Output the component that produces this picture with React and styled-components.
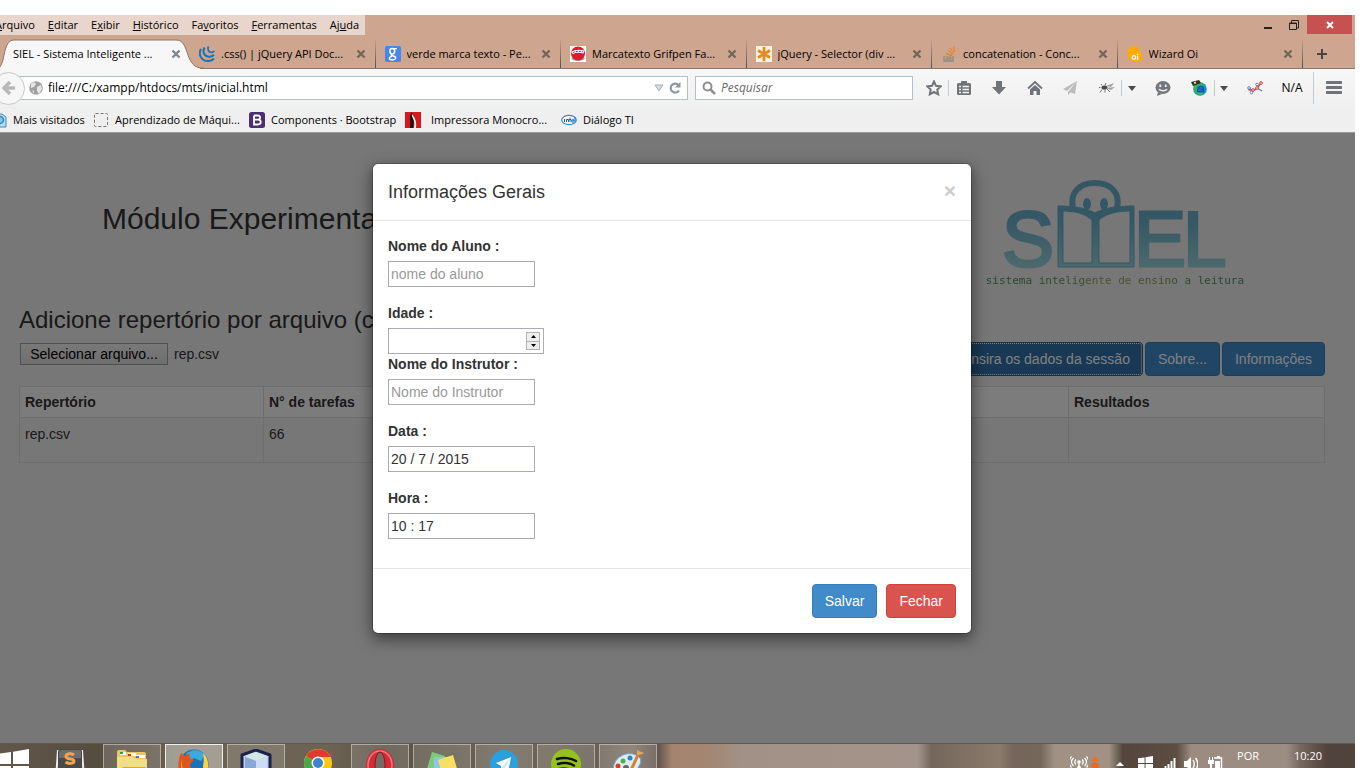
import React from "react";
import styled, { createGlobalStyle, css } from "styled-components";

const GlobalStyle = createGlobalStyle`
  *, *::before, *::after { box-sizing: border-box; }
  body { margin: 0; background: #fff; }
  button, input { font: inherit; margin: 0; }
  svg { display: block; flex: none; }
`;

const uiFont = `"Open Sans", "Noto Sans", sans-serif`;
const pageFont = `"Liberation Sans", Helvetica, Arial, sans-serif`;

const Desktop = styled.div`
  display: flex;
  min-height: 100vh;
  padding-top: 15px;
  padding-right: 11px;
  overflow: hidden;
  font: 12px/16px ${uiFont};
  color: #000;
`;

const Screen = styled.div`
  flex: 1;
  min-width: 0;
  margin-left: -11px;
  display: flex;
  flex-direction: column;
`;

/* ---------- window title bar and menu ---------- */

const TitleBar = styled.header`
  display: flex;
  justify-content: space-between;
  align-items: flex-start;
  height: 24px;
  background: #cea58e;
`;

const MenuBar = styled.nav`
  display: flex;
  gap: 13px;
  height: 20px;
  padding: 2px 6px;
  background: #e8d5cb;
  font-size: 11px;
`;

const MenuItem = styled.button`
  padding: 0;
  border: 0;
  background: none;
  color: #000;
  white-space: nowrap;
  line-height: 16px;
`;

const WindowButtons = styled.div`
  display: flex;
  padding-right: 3px;
`;

const WindowButton = styled.button`
  display: grid;
  place-items: center;
  width: ${(p) => (p.$close ? 45 : 26)}px;
  height: 19px;
  padding: 0;
  border: 0;
  background: ${(p) => (p.$close ? "#c75050" : "transparent")};
`;

/* ---------- tabs ---------- */

const TabStrip = styled.div`
  display: grid;
  grid-template-columns: 201px repeat(6, minmax(0, 1fr)) 52px;
  height: 30px;
  background: #cea58e;
  border-bottom: 1px solid #8f7768;
  font-size: 11px;
`;

const Tab = styled.div`
  position: relative;
  display: flex;
  align-items: center;
  gap: 6px;
  min-width: 0;
  height: 29px;
  padding: 0 9px 0 9px;
  border-right: 1px solid transparent;
  border-image: linear-gradient(#cea58e, #4f4c4e) 1;
  ${(p) =>
    p.$active &&
    css`
      height: 30px;
      padding-left: 24px;
      border: 0;
      z-index: 1;
    `}
`;

const TabShape = styled.svg`
  position: absolute;
  left: 9px;
  top: 0;
  z-index: -1;
`;

const TabTitle = styled.span`
  flex: 1;
  min-width: 0;
  white-space: nowrap;
  overflow: hidden;
`;

const PlainButton = styled.button`
  display: grid;
  place-items: center;
  padding: 0;
  border: 0;
  background: none;
`;

/* ---------- navigation ---------- */

const NavBar = styled.div`
  display: flex;
  align-items: center;
  height: 38px;
  padding: 0 7px 0 3px;
  background: linear-gradient(#f7f7f7, #f0f0f0);
`;

const BackButton = styled.button`
  display: grid;
  place-items: center;
  width: 33px;
  height: 33px;
  margin-right: -8px;
  z-index: 1;
  padding: 0;
  border: 1px solid #c8c8c8;
  border-radius: 50%;
  background: #f6f6f6;
`;

const FieldBox = styled.label`
  display: flex;
  align-items: center;
  height: 24px;
  border: 1px solid #b5bec6;
  background: #fff;
  ${(p) =>
    p.$search
      ? css`
          width: 218px;
          gap: 5px;
          padding: 0 6px;
          margin: 0 11px 0 7px;
        `
      : css`
          flex: 1;
          gap: 5px;
          padding: 0 6px 0 11px;
        `}
`;

const FieldInput = styled.input`
  flex: 1;
  min-width: 0;
  padding: 0;
  border: 0;
  outline: 0;
  background: none;
  color: #000;
  &::placeholder { color: #6a6a6a; font-style: italic; opacity: 1; }
`;

const NavButton = styled.button`
  display: grid;
  place-items: center;
  width: ${(p) => p.$w}px;
  height: 24px;
  padding: 0;
  border: 0;
  background: none;
  color: #000;
`;

const Divider = styled.span`
  width: 1px;
  height: ${(p) => (p.$tall ? 32 : 16)}px;
  margin: 0 ${(p) => p.$gap || 0}px;
  background: #c3ccd6;
`;

const Bookmarks = styled.nav`
  display: grid;
  grid-template-columns: 102px repeat(3, 156px) auto;
  justify-content: start;
  height: 26px;
  padding-left: 2px;
  background: #efefef;
  border-bottom: 1px solid #9a9a9a;
  font-size: 11px;
`;

const Bookmark = styled.a`
  display: flex;
  align-items: center;
  gap: ${(p) => (p.$wide ? 10 : 6)}px;
  color: #000;
  text-decoration: none;
  white-space: nowrap;
`;

/* ---------- page ---------- */

const Page = styled.main`
  position: relative;
  flex: 1;
  padding: 38px 30px 40px;
  background: #eee;
  color: #333;
  font: 14px/20px ${pageFont};
`;

const PageHead = styled.div`
  display: flex;
  justify-content: space-between;
  align-items: flex-start;
  padding: 0 79px 0 83px;
`;

const PageTitle = styled.h1`
  margin: 31px 0 0;
  font-size: 30px;
  line-height: 33px;
  font-weight: 400;
`;

const Logo = styled.div`
  display: flex;
  flex-direction: column;
  align-items: center;
  padding-top: 8px;
`;

const LogoCaption = styled.span`
  padding: 0 2px 0 4px;
  font: 11px/20px "DejaVu Sans Mono", monospace;
  white-space: nowrap;
  color: transparent;
  background: linear-gradient(90deg, #4f8a68, #5f8c5c 25%, #a6a662 50%, #98985e 60%, #50886a 90%);
  background-clip: text;
`;

const SectionTitle = styled.h2`
  margin: 15px 0 8px;
  font-size: 24px;
  line-height: 28px;
  font-weight: 400;
`;

const Toolbar = styled.div`
  display: flex;
  justify-content: space-between;
  align-items: flex-start;
  margin-bottom: 10px;
`;

const FilePicker = styled.div`
  display: flex;
  gap: 6px;
  align-items: center;
  padding: 1px;
`;

const FileInput = styled.input`
  position: absolute;
  width: 1px;
  height: 1px;
  opacity: 0;
`;

const FileLabel = styled.label`
  width: 148px;
  height: 22px;
  border: 1px solid #a0a0a0;
  background: linear-gradient(#f2f2f2, #dedede);
  color: #000;
  text-align: center;
  white-space: nowrap;
`;

const ButtonRow = styled.div`
  display: flex;
  gap: ${(p) => p.$gap}px;
`;

const tones = {
  primary: ["#428bca", "#357ebd"],
  pressed: ["#3071a9", "#285e8e"],
  danger: ["#d9534f", "#d43f3a"],
};

const Button = styled.button`
  height: 34px;
  padding: 6px 12px;
  border: 1px solid ${(p) => tones[p.$tone][1]};
  border-radius: 4px;
  background: ${(p) => tones[p.$tone][0]};
  color: #fff;
  line-height: 20px;
  white-space: nowrap;
  ${(p) =>
    p.$tone === "pressed" &&
    css`
      outline: 1px dotted #fff;
      outline-offset: -2px;
    `}
`;

const Table = styled.table`
  width: 100%;
  table-layout: fixed;
  border-collapse: collapse;
  th, td {
    border: 1px solid #ddd;
    text-align: left;
    vertical-align: top;
  }
  th { padding: 5px; background: #f9f9f9; }
  td { padding: 6px 5px 18px; }
`;

const Col = styled.col`
  width: ${(p) => p.$w};
`;

/* ---------- modal ---------- */

const Backdrop = styled.div`
  position: absolute;
  inset: 0;
  padding: 30px;
  background: rgba(0, 0, 0, 0.5);
`;

const Dialog = styled.section`
  max-width: 600px;
  margin: 0 auto;
  border: 1px solid rgba(0, 0, 0, 0.2);
  border-radius: 6px;
  background: #fff;
  background-clip: padding-box;
  box-shadow: 0 5px 15px rgba(0, 0, 0, 0.5);
`;

const DialogHead = styled.header`
  display: flex;
  justify-content: space-between;
  align-items: center;
  padding: 15px;
  border-bottom: 1px solid #e5e5e5;
`;

const DialogTitle = styled.h3`
  margin: 0;
  font-size: 18px;
  line-height: 26px;
  font-weight: 400;
`;

const CloseButton = styled.button`
  padding: 0 0 4px;
  border: 0;
  background: none;
  font-size: 21px;
  line-height: 21px;
  font-weight: 700;
  color: #ccc;
`;

const DialogBody = styled.form`
  padding: 15px 15px 13px;
`;

const Field = styled.div`
  display: flex;
  flex-direction: column;
  align-items: flex-start;
  gap: 5px;
  margin-bottom: ${(p) => (p.$tight ? 0 : 16)}px;
`;

const FieldLabel = styled.label`
  font-weight: 700;
`;

const TextInput = styled.input`
  width: ${(p) => (p.type === "number" ? 156 : 147)}px;
  height: 26px;
  padding: 1px 2px;
  border: 1px solid #ababb3;
  border-radius: 0;
  background: #fff;
  color: #333;
  appearance: textfield;
  &::placeholder { color: #999; opacity: 1; }
  &::-webkit-inner-spin-button { appearance: none; }
`;

const NumberBox = styled.div`
  position: relative;
`;

const Spinner = styled.div`
  position: absolute;
  right: 4px;
  top: 4px;
  display: grid;
  width: 14px;
  height: 18px;
  border: 1px solid #b4b4b4;
  background: #eee;
`;

const SpinButton = styled(PlainButton)`
  border-bottom: 1px solid #b4b4b4;
  &:last-child { border-bottom: 0; }
`;

const DialogFoot = styled.footer`
  display: flex;
  justify-content: flex-end;
  padding: 15px;
  border-top: 1px solid #e5e5e5;
`;

/* ---------- taskbar ---------- */

const Taskbar = styled.footer`
  display: flex;
  justify-content: space-between;
  height: 25px;
  overflow: hidden;
  border-top: 1px solid #625a50;
  background: linear-gradient(
    90deg,
    #62594b 0%, #554c40 8%, #6b6253 14%, #6c6354 25%, #595144 29%, #6d6658 38%,
    #675f55 44%, #807366 47%, #62564e 49%, #a5846e 50%, #a28773 53%, #a29187 55%, #a39389 67%,
    #a3938a 68%, #75675c 69%, #8b7b6c 74%, #75655a 75%, #75675a 77%, #a09184 78%, #a09184 82%, #54463c 83%, #5d4d43 87%,
    #9b8b80 88%, #9c8d83 95%, #75675e 96%, #50423c 98%
  );
`;

const Apps = styled.div`
  display: flex;
  gap: 4px;
`;

const AppButton = styled.button`
  display: flex;
  justify-content: center;
  align-items: flex-start;
  width: ${(p) => (p.$start ? 48 : 58)}px;
  height: 40px;
  padding: 4px 0 0;
  border: 1px solid ${(p) => (p.$focus ? "#f0f0ec" : p.$open ? "rgba(215,210,200,.6)" : "transparent")};
  background: ${(p) => (p.$focus ? "rgba(255,255,255,.38)" : p.$open ? "rgba(255,255,255,.14)" : "none")};
`;

const Tray = styled.div`
  display: flex;
  align-items: flex-start;
  color: #fff;
`;

const TrayItem = styled.span`
  display: flex;
  justify-content: center;
  width: ${(p) => p.$w}px;
  padding-top: ${(p) => (p.$text ? 4 : 12)}px;
  font-size: 11px;
`;

/* ---------- small drawings ---------- */

const Svg = ({ w = 16, h = 16, vb, children }) => (
  <svg width={w} height={h} viewBox={vb || `0 0 ${w} ${h}`} fill="none" aria-hidden="true">
    {children}
  </svg>
);

const CloseGlyph = ({ color = "#75655d" }) => (
  <Svg w={10} h={10}><path d="M1.500 1.500l7 7M8.500 1.500l-7 7" stroke={color} strokeWidth="2.400" /></Svg>
);

const favicons = {
  jquery: (
    <Svg>
      <path d="M2 3C-1 8 2 14.500 8 15c3 .3 5-.5 7-2.500" stroke="#1b73b3" strokeWidth="2" />
      <path d="M5.500 1.500C3 6 5.500 10.500 10 10.800c2 .1 3.500-.5 5-2" stroke="#1b73b3" strokeWidth="2" />
      <path d="M9.500.5c-1.500 3 0 5.500 2.500 5.800 1.500.1 2.500-.4 3.300-1.300" stroke="#1b73b3" strokeWidth="1.800" />
    </Svg>
  ),
  google: (
    <Svg>
      <rect width="16" height="16" rx="1.500" fill="#4787ed" />
      <ellipse cx="7.300" cy="5.300" rx="2.400" ry="2.700" stroke="#fff" strokeWidth="1.500" />
      <path d="M9 2.700h3M7 8c-2 1.300 0 1.600 1.500 2 3.500 1 2.500 4-1 4-4 0-4-3-.5-3.700" stroke="#fff" strokeWidth="1.300" />
    </Svg>
  ),
  grif: (
    <Svg>
      <rect width="16" height="16" fill="#fff" />
      <ellipse cx="8" cy="12.500" rx="6.500" ry="2.500" fill="#aaa" />
      <circle cx="8" cy="7.500" r="7" fill="#d81e26" />
      <path d="M2 7c3-2 8-2 12-1" stroke="#fff" strokeWidth="3.200" />
      <path d="M3 6.500c3-1.500 7-1.500 10-.7" stroke="#d81e26" strokeWidth="1" strokeDasharray="2 1" />
    </Svg>
  ),
  star: (
    <Svg>
      <rect width="16" height="16" fill="#fdf1de" />
      <path d="M8 1v14M2 4.500l12 7M14 4.500l-12 7" stroke="#e38a25" strokeWidth="2.800" />
    </Svg>
  ),
  stack: (
    <Svg>
      <path d="M3 10v5h9v-5" stroke="#8b8b8b" strokeWidth="1.300" />
      <path d="M4.500 13h6" stroke="#918472" strokeWidth="1.300" />
      <path d="M4.500 10.800l6 .5" stroke="#a58552" strokeWidth="1.300" />
      <path d="M5 7.700l6 2" stroke="#bd8942" strokeWidth="1.300" />
      <path d="M7 4.500l5 4" stroke="#db8b32" strokeWidth="1.300" />
      <path d="M9 2l3.500 5M12.500.5l1.300 5.500" stroke="#f48024" strokeWidth="1.300" />
    </Svg>
  ),
  oi: (
    <Svg>
      <path d="M1 7C0 3 3 0 7 0c4 0 6 3 5 6 3 0 4 3 3.500 6-.5 3-3 4-5 3.500-2 1-5 .5-6-1.500C1 14 0 9 1 7z" fill="#ffab00" />
      <circle cx="7" cy="11.500" r="1.800" stroke="#fff" strokeWidth="1.300" />
      <path d="M10.700 9.800V14M10.700 7.700v1.200" stroke="#fff" strokeWidth="1.300" />
    </Svg>
  ),
};

const bookmarkIcons = {
  visited: (
    <Svg>
      <path d="M3 2h8l4 3v10H3z" fill="#b9dcf0" stroke="#3b8bb9" />
      <circle cx="9" cy="8" r="3.500" fill="#82c4e8" stroke="#3b8bb9" strokeWidth="1.500" />
    </Svg>
  ),
  blank: <Svg><rect x="1.500" y="1.500" width="13" height="13" rx="1" stroke="#777" strokeDasharray="3 2" /></Svg>,
  bootstrap: (
    <Svg>
      <rect width="16" height="16" rx="2.500" fill="#4b2f73" />
      <path d="M5 3.500h3.700c3.500 0 3 4.200 0 4.200H5m4 0c3.700 0 3.600 4.800 0 4.800H5v-9" stroke="#fff" strokeWidth="1.800" />
    </Svg>
  ),
  printer: (
    <Svg>
      <rect width="16" height="16" fill="#d9161c" />
      <path d="M7 0c-4 5-1 7-2 16h3c1-5 1-9 0-12z" fill="#151515" />
      <path d="M7 2c-1 4 4 5 2 14h2c1-6-1-10-4-14z" fill="#fff" />
    </Svg>
  ),
  intel: (
    <Svg>
      <ellipse cx="8" cy="8" rx="7.300" ry="4.700" fill="#f4fafe" stroke="#3b8bc8" strokeWidth="1.200" />
      <path d="M3.500 7v3M5.500 10V7.500h2V10M9 5.500V10M10 7.500H8M10.500 8.800h2.500c0-2-2.500-2-2.500 0s2 1.500 2.500 1M14 5v5" stroke="#0e6eb4" />
    </Svg>
  ),
};

const CaretDown = () => <Svg w={8} h={5}><path d="M0 0h8L4 5z" fill="#4b4b4b" /></Svg>;

const nav = {
  back: <Svg w={18} h={16}><path d="M15 8H5M10 2L4 8l6 6" stroke="#b9b9b9" strokeWidth="3.500" /></Svg>,
  globe: (
    <Svg w={14} h={14}>
      <circle cx="7" cy="7" r="6.800" fill="#a1a1a1" />
      <path d="M2 3l3-2 2 2-2 3-3 1zM8 6l4-2 1 4-3 5-2-3zM3 9l2 1v3z" fill="#e6e6e6" />
    </Svg>
  ),
  drop: <Svg w={10} h={8}><path d="M1 1h8L5 7z" fill="#d6dde4" stroke="#a6b0ba" /></Svg>,
  reload: (
    <Svg w={12} h={12}>
      <path d="M9.500 3A4.500 4.500 0 1 0 10 8.500" stroke="#8b97a3" strokeWidth="2.200" />
      <path d="M11.500 0v5.500H6z" fill="#8b97a3" />
    </Svg>
  ),
  search: (
    <Svg w={14} h={14}>
      <circle cx="5.500" cy="5.500" r="4" stroke="#8e8e8e" strokeWidth="2" />
      <path d="M8.500 8.500l4.500 4.500" stroke="#8e8e8e" strokeWidth="2.500" />
    </Svg>
  ),
  star: (
    <Svg><path d="M8 1.500l2 4.300 4.700.6-3.400 3.200.9 4.700L8 12l-4.200 2.300.9-4.700L1.300 6.400 6 5.800z" stroke="#707378" strokeWidth="2" /></Svg>
  ),
  list: (
    <Svg>
      <rect x="1" y="3" width="14" height="12" rx="1.500" fill="#707378" />
      <path d="M5 3.500V1h6v2.500" fill="#707378" />
      <path d="M3 6.500h2M6.500 6.500H13M3 9.500h2M6.500 9.500H13M3 12.500h2M6.500 12.500H13" stroke="#f4f4f4" strokeWidth="1.300" />
    </Svg>
  ),
  download: <Svg><path d="M5 1h6v6h4l-7 7.500L1 7h4z" fill="#707378" /></Svg>,
  home: (
    <Svg>
      <path d="M1 8.500l7-6.500 7 6.500" stroke="#707378" strokeWidth="1.800" />
      <path d="M8 5l5 4.500V15h-3.500v-4h-3v4H3V9.500z" fill="#707378" />
    </Svg>
  ),
  plane: (
    <Svg>
      <path d="M15 1L1 9l4 2zM15 1L6 12v3l2.500-2.500L13 14z" fill="#bcbcbc" />
    </Svg>
  ),
  fly: (
    <Svg>
      <ellipse cx="5.500" cy="7.500" rx="3" ry="2" fill="#4a4a4a" />
      <path d="M7 6l8-3-3 4zM7 8l9-1-4 3z" fill="#a3a3a3" />
      <path d="M3 5.500L2 4M6 5.500L7 3M3 9.500l-2 3M6 9.500v3M8 9l3 3M1.500 7.500H0" stroke="#555" strokeWidth=".8" />
    </Svg>
  ),
  chat: (
    <Svg>
      <ellipse cx="8" cy="7.500" rx="7.500" ry="6.500" fill="#74777b" />
      <path d="M3 12l-1 4 5-2" fill="#74777b" />
      <path d="M5.300 4.500v2.500M10.700 4.500v2.500" stroke="#f2f2f2" strokeWidth="1.800" />
      <path d="M4 9.200c1.500 2.200 6.500 2.200 8 0" stroke="#f2f2f2" strokeWidth="1.500" />
    </Svg>
  ),
  world: (
    <Svg>
      <circle cx="9" cy="9" r="6.800" fill="#1a8fd6" />
      <path d="M3 5c4-4 10-2 12 2-4-3-9-1-9 2s4 4 7 4c-5 5-12 0-10-8z" fill="#2fb463" />
      <path d="M7 8c2-3 6-1 5.500 1.500v2c-2-1-6 1.500-6-1s4-1.500 6-1" stroke="#1450a8" strokeWidth="1.400" />
      <path d="M0 2l8-2 2 3-8 3z" fill="#3b2b22" />
      <path d="M3 3l2-.5" stroke="#e7d4b5" strokeWidth="2" />
    </Svg>
  ),
  chart: (
    <Svg>
      <path d="M1 7l5 4 4-3 5 3" stroke="#5b7fc7" strokeWidth="1.300" />
      <path d="M1 9.500l5 1 4-2 4-5.500" stroke="#dd3a3a" strokeWidth="1.300" />
      <g stroke="#dd3a3a" fill="#fff"><circle cx="6" cy="10" r="1.300" /><circle cx="10" cy="8" r="1.300" /><circle cx="14" cy="3" r="1.300" /></g>
      <g stroke="#5b7fc7" fill="#fff"><circle cx="2" cy="8" r="1.300" /><circle cx="4.500" cy="12.500" r="1.300" /><circle cx="10" cy="4.500" r="1.300" /></g>
    </Svg>
  ),
  menu: <Svg><path d="M1 2.500h14M1 7.500h14M1 12.500h14" stroke="#707378" strokeWidth="3" strokeLinecap="round" /></Svg>,
};

const apps = [
  ["Sublime Text", "", (
    <Svg w={30} h={30}>
      <path d="M3 1L1 30M27 1l2 29" stroke="#eee" strokeWidth="2" />
      <rect x="3" y="0" width="24" height="30" rx="3" fill="#4a4a4a" />
      <path d="M4 9h22V3a2 2 0 0 0-2-2H6a2 2 0 0 0-2 2z" fill="#6d6d6d" />
      <path d="M19 6c-2-2-8-2-8 1.500S19 9 19 12s-6 3-8.500 1" stroke="#f7a24a" strokeWidth="3" />
    </Svg>
  )],
  ["Explorador de Arquivos", "open", (
    <Svg w={32} h={30}>
      <path d="M1 3q0-2 2-2h6l2 2h17q2 0 2 2v25H1z" fill="#e6c868" />
      <path d="M4 3h6v3H4zM12 4h8v3h-8zM20 6h9v3h-9z" fill="#fff" />
      <path d="M4 3h3v2H4z" fill="#2aa52a" /><path d="M12 5h3v2h-3z" fill="#c83b2b" /><path d="M20 7h3v2h-3z" fill="#2c8bd8" />
      <path d="M1 8h16l2 2h12v20H1z" fill="#f4dd8a" />
      <path d="M5 30v-7q0-4 4-4h20v3" stroke="#64bfe0" strokeWidth="2" />
    </Svg>
  )],
  ["Firefox", "focus", (
    <Svg w={32} h={32}>
      <circle cx="16" cy="15" r="14.500" fill="#1c72b8" />
      <path d="M8 5c5-5 14-5 19 1l-4 6-7-3-5 3z" fill="#3fa9df" />
      <path d="M25 4c8 7 7 21-5 27 4-5 6-9 5-14 1-5 1-9 0-13z" fill="#ffd340" />
      <path d="M3 4l4 3 4-3 1 5 4 2-4 4c0 5 5 7 9 5-2 8-12 10-18 5C-1 20 0 10 3 4z" fill="#e0551b" />
      <path d="M4 10c-1 6 1 14 8 19C5 28 1 20 4 10z" fill="#fba52c" />
    </Svg>
  )],
  ["VirtualBox", "open", (
    <Svg w={32} h={32}>
      <path d="M16 1l14 5v18l-14 8L2 24V6z" fill="#bdd0e6" stroke="#1c2150" strokeWidth="3" strokeLinejoin="round" />
      <path d="M5 7l11-4 11 4-11 5z" fill="#d5e7df" />
      <path d="M5 8l11 4v17L5 24z" fill="#8aa7d6" /><path d="M27 8l-11 4v17l11-5z" fill="#cddcf4" />
    </Svg>
  )],
  ["Chrome", "", (
    <Svg w={28} h={28}>
      <circle cx="14" cy="14" r="14" fill="#fbc90d" />
      <path d="M14 14L2 7A14 14 0 0 1 26.500 8H14z" fill="#dd3b2f" />
      <path d="M14 14L2 7a14 14 0 0 0 10 21l6-9z" fill="#4ca749" />
      <circle cx="14" cy="14" r="6.500" fill="#fff" /><circle cx="14" cy="14" r="5" fill="#3f83cd" />
    </Svg>
  )],
  ["Opera", "open", (
    <Svg w={28} h={32}>
      <ellipse cx="14" cy="16" rx="14" ry="16" fill="#d62a35" />
      <ellipse cx="14" cy="16" rx="12" ry="14" stroke="#f17680" strokeWidth="1.500" />
      <ellipse cx="14" cy="16" rx="5" ry="13" fill="#756b60" stroke="#8a1420" />
    </Svg>
  )],
  ["Notas Autoadesivas", "open", (
    <Svg w={32} h={30}>
      <path d="M6 3l13 4-4 16-14-3z" fill="#7ecb7b" /><path d="M8 8h15v18H8z" fill="#8bc5f2" />
      <path d="M12 11l15-5 5 17-15 6z" fill="#f8df63" />
    </Svg>
  )],
  ["Telegram", "open", (
    <Svg w={28} h={30}>
      <circle cx="14" cy="15" r="14" fill="#2ba0da" />
      <path d="M6 14l15-6-3 16-5-5-2 3v-5z" fill="#fff" /><path d="M12 18l9-10-7 12z" fill="#cfe3ef" />
    </Svg>
  )],
  ["Spotify", "open", (
    <Svg w={30} h={30}>
      <circle cx="15" cy="15" r="15" fill="#94c11c" />
      <path d="M6 10c6-2 14-1 19 2M7 15c5-2 12-1 16 1.500M8 20c4-1 9-.5 13 1.500" stroke="#111" strokeWidth="2.500" strokeLinecap="round" />
    </Svg>
  )],
  ["Paint", "open", (
    <Svg w={32} h={32}>
      <path d="M1 20C2 9 12 3 21 5c9 2 9 8 6 12-3 5 0 8-5 12-6 4-21 2-21-9z" fill="#dcebf5" stroke="#6ba4c9" />
      <circle cx="6" cy="17" r="2.500" fill="#d6402e" /><circle cx="11" cy="12" r="2.500" fill="#54ae46" /><circle cx="18" cy="9" r="2.500" fill="#2d82d4" /><circle cx="14" cy="19" r="3" fill="#6a645c" />
      <path d="M25 0c1 3 4 2 7 4-2 2-5 1-7 3z" fill="#e1a85b" />
      <path d="M26 6L19 21" stroke="#d9802c" strokeWidth="3" />
    </Svg>
  )],
];

const WindowsMark = ({ size }) => (
  <Svg w={size} h={size} vb="0 0 32 32">
    <path d="M0 5l14-2v12H0zM16 2.700L32 0v15H16zM0 17h14v12L0 27zM16 17h16v15l-16-2.500z" fill="#fff" />
  </Svg>
);

const tray = [
  [18, <Svg w={18} h={16}><g stroke="#fff" strokeWidth="1.200"><circle cx="9" cy="6" r="1.200" fill="#fff" /><path d="M6 3.500c-1.500 1.500-1.500 3.500 0 5M3.500 2c-2.500 2.500-2.500 5.500 0 8M1.500.5c-3 3.500-3 7.500 0 11M12 3.500c1.500 1.500 1.500 3.500 0 5M14.500 2c2.500 2.500 2.500 5.500 0 8M16.500.5c3 3.500 3 7.500 0 11M9 7v8M9 9l-3 6M9 9l3 6" /></g></Svg>],
  [14, <Svg w={8} h={14}><path d="M4 0l4 5H0z" fill="#e86f2c" /><circle cx="4" cy="10" r="3.700" fill="#e4692b" /></Svg>],
  [36, <Svg w={8} h={14}><path d="M4 6l4 4H0z" fill="#fff" /></Svg>],
  [14, <WindowsMark size={15} />],
  [34, <Svg w={16} h={16}><path d="M1.500 15v-3M4.500 15v-5M7.500 15V8M10.500 15V5M13.500 15V2" stroke="#fff" strokeWidth="2" /></Svg>],
  [10, <Svg w={14} h={16}><path d="M0 5h3l4-4v14l-4-4H0z" fill="#fff" /><path d="M9 4c2 3 2 5 0 8M11.500 2c3 4 3 8 0 12" stroke="#fff" strokeWidth="1.300" /></Svg>],
  [39, <Svg w={16} h={16}><path d="M6 2h7.500v14" stroke="#fff" strokeWidth="1.500" /><path d="M9 0h3v2H9zM7 5h5v11H7z" fill="#fff" /><path d="M0 4h6v4H4v8H2V8H0z" fill="#fff" /><path d="M1.500 1v3M4.500 1v3" stroke="#fff" /></Svg>],
];

const SielMark = () => (
  <svg width="224" height="92" viewBox="0 0 224 92" aria-label="SIEL" role="img">
    <defs>
      <linearGradient id="siel" gradientUnits="userSpaceOnUse" x1="0" y1="0" x2="0" y2="92">
        <stop offset="0" stopColor="#68acca" />
        <stop offset="0.45" stopColor="#69b0cc" />
        <stop offset="1" stopColor="#9cd6da" />
      </linearGradient>
    </defs>
    <path d="M71 30C67 12 79 4 93 4s26 8 22 26" fill="none" stroke="url(#siel)" strokeWidth="6" />
    <ellipse cx="85" cy="25" rx="4" ry="6" fill="url(#siel)" />
    <ellipse cx="102" cy="25" rx="4" ry="6" fill="url(#siel)" />
    <path
      fill="url(#siel)"
      stroke="#68aecd"
      fillRule="evenodd"
      d="M56 27c17 0 28 2 37 7 9-5 20-7 39-7v61H56zM61 32v52h29V41c-7-6-16-9-29-9zM128 32c-14 0-24 3-31 9v43h31z"
    />
    <g fill="url(#siel)" stroke="url(#siel)" strokeWidth="3" fontFamily="Liberation Sans, Arial, sans-serif" fontSize="78">
      <text x="0" y="87">S</text>
      <text x="132" y="87">E</text>
      <text x="181" y="87">L</text>
    </g>
  </svg>
);

/* ---------- content ---------- */

const menus = [["", "A", "rquivo"], ["", "E", "ditar"], ["E", "x", "ibir"], ["", "H", "istórico"], ["Fa", "v", "oritos"], ["", "F", "erramentas"], ["Aj", "u", "da"]];

const tabs = [
  ["jquery", ".css() | jQuery API Doc..."],
  ["google", "verde marca texto - Pe..."],
  ["grif", "Marcatexto Grifpen Fa..."],
  ["star", "jQuery - Selector (div ..."],
  ["stack", "concatenation - Conc..."],
  ["oi", "Wizard Oi"],
];

const bookmarks = [
  ["visited", "Mais visitados"],
  ["blank", "Aprendizado de Máqui..."],
  ["bootstrap", "Components · Bootstrap"],
  ["printer", "Impressora Monocro..."],
  ["intel", "Diálogo TI"],
];

function BrowserChrome() {
  return (
    <>
      <TitleBar>
        <MenuBar>
          {menus.map(([a, key, b]) => (
            <MenuItem key={b}>{a}<u>{key}</u>{b}</MenuItem>
          ))}
        </MenuBar>
        <WindowButtons>
          <WindowButton aria-label="Minimizar"><Svg w={8} h={12}><path d="M0 9h8" stroke="#222" strokeWidth="2" /></Svg></WindowButton>
          <WindowButton aria-label="Restaurar"><Svg w={10} h={10}><path d="M.5 3h7v6.500h-7zM2.500 3V.5h7V8H7.500M.5 3.500h7" stroke="#222" /></Svg></WindowButton>
          <WindowButton $close aria-label="Fechar janela"><Svg w={8} h={8}><path d="M1 1l6 6M7 1L1 7" stroke="#fff" strokeWidth="2" /></Svg></WindowButton>
        </WindowButtons>
      </TitleBar>
      <TabStrip>
        <Tab $active>
          <TabShape width="206" height="30" viewBox="0 0 206 30">
            <path d="M0 30C8 26 4 1 16 1h162c14 0 8 25 24 28v1z" fill="#f7f7f7" />
            <path d="M0 29C8 26 4 1 16 1h162c14 0 8 25 24 28h4" fill="none" stroke="#8f7768" />
          </TabShape>
          <TabTitle>SIEL - Sistema Inteligente ...</TabTitle>
          <PlainButton aria-label="Fechar aba"><CloseGlyph color="#7c8791" /></PlainButton>
        </Tab>
        {tabs.map(([icon, title]) => (
          <Tab key={title}>
            {favicons[icon]}
            <TabTitle>{title}</TabTitle>
            <PlainButton aria-label="Fechar aba"><CloseGlyph /></PlainButton>
          </Tab>
        ))}
        <PlainButton aria-label="Nova aba"><Svg w={24} h={10}><path d="M5 0v10M0 5h10" stroke="#4a4341" strokeWidth="2" /></Svg></PlainButton>
      </TabStrip>
      <NavBar>
        <BackButton aria-label="Voltar">{nav.back}</BackButton>
        <FieldBox>
          {nav.globe}
          <FieldInput aria-label="Endereço" defaultValue="file:///C:/xampp/htdocs/mts/inicial.html" />
          {nav.drop}
          {nav.reload}
        </FieldBox>
        <FieldBox $search>
          {nav.search}
          <FieldInput aria-label="Pesquisar" placeholder="Pesquisar" />
        </FieldBox>
        <NavButton $w={20} aria-label="Favoritar">{nav.star}</NavButton>
        <Divider $gap={4} />
        <NavButton $w={22} aria-label="Lista">{nav.list}</NavButton>
        <NavButton $w={48} aria-label="Downloads">{nav.download}</NavButton>
        <NavButton $w={24} aria-label="Início">{nav.home}</NavButton>
        <NavButton $w={46} aria-label="Enviar">{nav.plane}</NavButton>
        <NavButton $w={28} aria-label="Firebug">{nav.fly}</NavButton>
        <Divider />
        <NavButton $w={20} aria-label="Opções do Firebug"><CaretDown /></NavButton>
        <NavButton $w={42} aria-label="Conversa">{nav.chat}</NavButton>
        <NavButton $w={30} aria-label="Mundo">{nav.world}</NavButton>
        <Divider />
        <NavButton $w={18} aria-label="Opções do mundo"><CaretDown /></NavButton>
        <NavButton $w={44} aria-label="Gráfico">{nav.chart}</NavButton>
        <NavButton $w={30}>N/A</NavButton>
        <Divider $tall $gap={6} />
        <NavButton $w={28} aria-label="Menu">{nav.menu}</NavButton>
      </NavBar>
      <Bookmarks>
        {bookmarks.map(([icon, title]) => (
          <Bookmark key={title} href="#" $wide={icon === "printer"}>{bookmarkIcons[icon]}{title}</Bookmark>
        ))}
      </Bookmarks>
    </>
  );
}

function InfoDialog() {
  return (
    <Backdrop>
      <Dialog role="dialog" aria-labelledby="dialog-title">
        <DialogHead>
          <DialogTitle id="dialog-title">Informações Gerais</DialogTitle>
          <CloseButton aria-label="Fechar">×</CloseButton>
        </DialogHead>
        <DialogBody>
          <Field>
            <FieldLabel htmlFor="aluno">Nome do Aluno :</FieldLabel>
            <TextInput id="aluno" type="text" placeholder="nome do aluno" />
          </Field>
          <Field $tight>
            <FieldLabel htmlFor="idade">Idade :</FieldLabel>
            <NumberBox>
              <TextInput id="idade" type="number" />
              <Spinner>
                <SpinButton type="button" aria-label="Aumentar"><Svg w={5} h={3}><path d="M0 3L2.500 0 5 3z" fill="#000" /></Svg></SpinButton>
                <SpinButton type="button" aria-label="Diminuir"><Svg w={5} h={3}><path d="M0 0h5L2.500 3z" fill="#000" /></Svg></SpinButton>
              </Spinner>
            </NumberBox>
          </Field>
          <Field>
            <FieldLabel htmlFor="instrutor">Nome do Instrutor :</FieldLabel>
            <TextInput id="instrutor" type="text" placeholder="Nome do Instrutor" />
          </Field>
          <Field>
            <FieldLabel htmlFor="data">Data :</FieldLabel>
            <TextInput id="data" type="text" defaultValue="20 / 7 / 2015" />
          </Field>
          <Field>
            <FieldLabel htmlFor="hora">Hora :</FieldLabel>
            <TextInput id="hora" type="text" defaultValue="10 : 17" />
          </Field>
        </DialogBody>
        <DialogFoot>
          <ButtonRow $gap={9}>
            <Button $tone="primary">Salvar</Button>
            <Button $tone="danger">Fechar</Button>
          </ButtonRow>
        </DialogFoot>
      </Dialog>
    </Backdrop>
  );
}

export default function App() {
  return (
    <>
      <GlobalStyle />
      <Desktop>
        <Screen>
          <BrowserChrome />
          <Page>
            <PageHead>
              <PageTitle>Módulo Experimental</PageTitle>
              <Logo>
                <SielMark />
                <LogoCaption>sistema inteligente de ensino a leitura</LogoCaption>
              </Logo>
            </PageHead>
            <SectionTitle>Adicione repertório por arquivo (csv)</SectionTitle>
            <Toolbar>
              <FilePicker>
                <FileInput id="arquivo" type="file" />
                <FileLabel htmlFor="arquivo">Selecionar arquivo...</FileLabel>
                <span>rep.csv</span>
              </FilePicker>
              <ButtonRow $gap={2}>
                <Button $tone="pressed">Insira os dados da sessão</Button>
                <Button $tone="primary">Sobre...</Button>
                <Button $tone="primary">Informações</Button>
              </ButtonRow>
            </Toolbar>
            <Table>
              <colgroup><Col $w="244px" /><Col $w="auto" /><Col $w="256px" /></colgroup>
              <thead><tr><th>Repertório</th><th>N° de tarefas</th><th>Resultados</th></tr></thead>
              <tbody><tr><td>rep.csv</td><td>66</td><td /></tr></tbody>
            </Table>
            <InfoDialog />
          </Page>
          <Taskbar>
            <Apps>
              <AppButton $start aria-label="Iniciar"><WindowsMark size={32} /></AppButton>
              {apps.map(([name, state, icon]) => (
                <AppButton key={name} $open={state === "open"} $focus={state === "focus"} aria-label={name}>{icon}</AppButton>
              ))}
            </Apps>
            <Tray>
              {tray.map(([w, icon], i) => <TrayItem key={i} $w={w}>{icon}</TrayItem>)}
              <TrayItem $text $w={26}>POR</TrayItem>
              <TrayItem $text $w={94}>10:20</TrayItem>
            </Tray>
          </Taskbar>
        </Screen>
      </Desktop>
    </>
  );
}
